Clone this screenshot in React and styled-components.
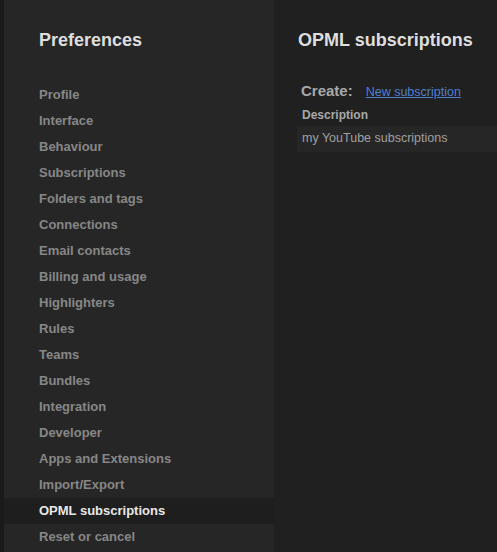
import React from 'react';
import styled, { createGlobalStyle } from 'styled-components';

const GlobalStyle = createGlobalStyle`
  html, body {
    margin: 0;
    padding: 0;
    background-color: #202020;
    font-family: "Liberation Sans", Arial, sans-serif;
  }
`;

const Page = styled.div`
  display: flex;
  min-height: 552px;
  background-color: #202020;
`;

const EdgeStrip = styled.div`
  width: 4px;
  flex-shrink: 0;
  background-color: #1a1a1a;
`;

const Sidebar = styled.nav`
  width: 270px;
  flex-shrink: 0;
  background-color: #262626;
  padding-top: 29px;
`;

const SidebarTitle = styled.h1`
  margin: 0 0 31px 35px;
  font-size: 18px;
  line-height: 22px;
  font-weight: bold;
  color: #dedede;
`;

const NavList = styled.ul`
  list-style: none;
  margin: 0;
  padding: 0;
`;

const NavItem = styled.li`
  height: 26px;
  line-height: 26px;
  padding-left: 35px;
  font-size: 13px;
  font-weight: bold;
  color: ${props => (props.$active ? '#e8e8e8' : '#878787')};
  background-color: ${props => (props.$active ? '#1e1e1e' : 'transparent')};
  cursor: pointer;
`;

const Main = styled.main`
  flex: 1;
  padding: 29px 0 0 23px;
`;

const MainTitle = styled.h2`
  margin: 0 0 31px 1px;
  font-size: 18px;
  line-height: 22px;
  font-weight: bold;
  color: #dedede;
`;

const CreateRow = styled.div`
  display: flex;
  align-items: baseline;
  gap: 13px;
  padding-left: 4px;
  height: 21px;
`;

const CreateLabel = styled.span`
  font-size: 15px;
  font-weight: bold;
  color: #a8a8a8;
`;

const Link = styled.a`
  font-size: 12.5px;
  color: #4f7fcf;
  text-decoration: underline;
  cursor: pointer;
`;

const Table = styled.div`
  display: flex;
  flex-direction: column;
`;

const HeaderCell = styled.div`
  box-sizing: border-box;
  height: 23px;
  padding: 2px 0 0 5px;
  line-height: 21px;
  font-size: 12px;
  font-weight: bold;
  color: #a8a8a8;
`;

const Row = styled.div`
  height: 26px;
  line-height: 25px;
  padding-left: 5px;
  font-size: 12.5px;
  color: #a0a0a0;
  background-color: #262626;
`;

const navItems = [
  'Profile',
  'Interface',
  'Behaviour',
  'Subscriptions',
  'Folders and tags',
  'Connections',
  'Email contacts',
  'Billing and usage',
  'Highlighters',
  'Rules',
  'Teams',
  'Bundles',
  'Integration',
  'Developer',
  'Apps and Extensions',
  'Import/Export',
  'OPML subscriptions',
  'Reset or cancel',
];

const App = () => {
  return (
    <>
      <GlobalStyle />
      <Page>
        <EdgeStrip />
        <Sidebar>
          <SidebarTitle>Preferences</SidebarTitle>
          <NavList>
            {navItems.map(item => (
              <NavItem key={item} $active={item === 'OPML subscriptions'}>
                {item}
              </NavItem>
            ))}
          </NavList>
        </Sidebar>
        <Main>
          <MainTitle>OPML subscriptions</MainTitle>
          <CreateRow>
            <CreateLabel>Create:</CreateLabel>
            <Link>New subscription</Link>
          </CreateRow>
          <Table>
            <HeaderCell>Description</HeaderCell>
            <Row>my YouTube subscriptions</Row>
          </Table>
        </Main>
      </Page>
    </>
  );
};

export default App;
